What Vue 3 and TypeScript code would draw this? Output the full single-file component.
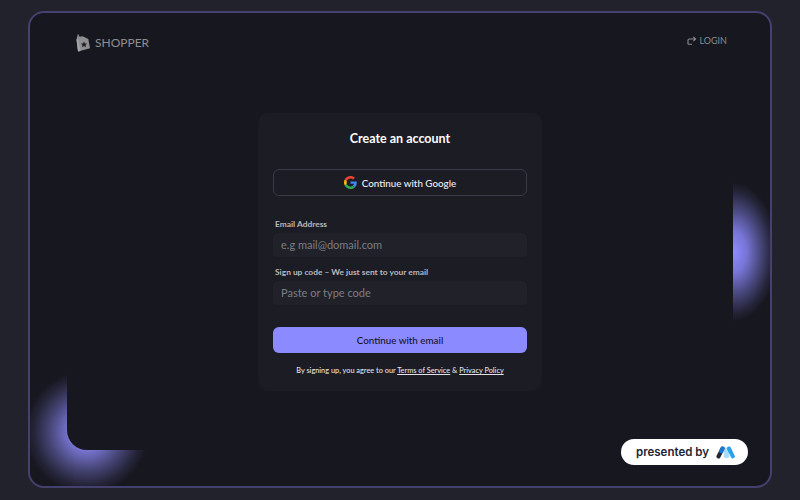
<template>
  <div class="page">
    <div class="frame">
      <div class="glow glow-left"></div>
      <div class="glow glow-right"></div>
      <div class="panel">
        <header class="topbar">
          <div class="brand">
            <svg class="brand-icon" width="16" height="19" viewBox="0 0 16 19">
              <path d="M3 0.8 L4.600 3.700 L7.500 3.300 L13.300 6 L15 15.200 L3 18.400 L1.500 6.200 Z" fill="#8f8f92" />
              <path d="M3.200 6.500 L5.500 18 L3 18.400 L1.500 6.200 Z" fill="#a6a6a9" />
              <path d="M9 8.500 L9.900 10.500 L12 10.500 L10.500 12 L11 14.200 L9 13.100 L7 14.300 L7.500 12 L6 10.500 L8.100 10.500 Z" fill="#1c1c22" />
            </svg>
            <span>SHOPPER</span>
          </div>
          <a class="login">
            <svg width="10" height="9" viewBox="0 0 10 9">
              <path d="M1 8.200 V4.200 Q1 3 2.200 3 H8.400 M6.300 0.800 L8.600 3 L6.300 5.200 M1 8.200 H5" fill="none" stroke="#8a8a8e" stroke-width="1.100" />
            </svg>
            <span>LOGIN</span>
          </a>
        </header>

        <main class="center">
          <form class="card" @submit.prevent>
            <h1>Create an account</h1>
            <button type="button" class="google-btn">
              <svg width="13" height="13" viewBox="0 0 48 48">
                <path fill="#EA4335" d="M24 9.500c3.500 0 6.700 1.200 9.200 3.600l6.900-6.900C35.900 2.400 30.500 0 24 0 14.600 0 6.500 5.400 2.600 13.200l8 6.200C12.400 13.700 17.700 9.500 24 9.500z" />
                <path fill="#4285F4" d="M47 24.500c0-1.600-.1-3.100-.4-4.500H24v9h12.900c-.6 3-2.200 5.500-4.700 7.200l7.700 6C44.400 38.100 47 31.900 47 24.500z" />
                <path fill="#FBBC05" d="M10.500 28.600c-.5-1.400-.8-3-.8-4.600s.3-3.200.8-4.600l-8-6.200C.9 16.500 0 20.100 0 24s.9 7.500 2.600 10.800l7.900-6.200z" />
                <path fill="#34A853" d="M24 48c6.500 0 11.900-2.100 15.900-5.800l-7.700-6c-2.200 1.400-4.900 2.300-8.200 2.300-6.300 0-11.600-4.200-13.500-9.900l-8 6.200C6.500 42.600 14.600 48 24 48z" />
              </svg>
              <span>Continue with Google</span>
            </button>

            <label class="field first">
              <span>Email Address</span>
              <input type="text" placeholder="e.g mail@domail.com" />
            </label>
            <label class="field">
              <span>Sign up code – We just sent to your email</span>
              <input type="text" placeholder="Paste or type code" />
            </label>

            <button type="submit" class="email-btn">Continue with email</button>
            <p class="terms">
              By signing up, you agree to our <a>Terms of Service</a> &amp; <a>Privacy Policy</a>
            </p>
          </form>
        </main>
      </div>

      <div class="presented">
        <span>presented by</span>
        <svg width="20" height="13" viewBox="0 0 20 13">
          <path d="M8 2.500 L11.500 10" stroke="#a9dcfb" stroke-width="4" stroke-linecap="round" />
          <path d="M12.500 2.500 L9.500 10" stroke="#a9dcfb" stroke-width="4" stroke-linecap="round" />
          <path d="M13 2.500 L16.800 10.300" stroke="#2aa0ee" stroke-width="4" stroke-linecap="round" />
          <path d="M6.500 2.500 L2.500 10.500" stroke="#24272f" stroke-width="4" stroke-linecap="round" />
          <path d="M6.500 2.500 L5.200 5.200" stroke="#1577d9" stroke-width="4" stroke-linecap="round" />
        </svg>
      </div>
    </div>
  </div>
</template>

<script setup lang="ts">
</script>

<style>
html, body {
  margin: 0;
  background: #22222c;
}
</style>

<style scoped>
.page {
  width: 800px;
  height: 500px;
  box-sizing: border-box;
  padding: 11px 28px 12px;
  background: #22222c;
  font-family: Lato, "Open Sans", sans-serif;
}

.frame {
  position: relative;
  height: 100%;
  box-sizing: border-box;
  padding: 0 37px 36px;
  border: 2px solid #45416f;
  border-radius: 16px;
  background: #17171f;
  overflow: hidden;
  display: flex;
}

.glow {
  position: absolute;
}

.glow-left {
  left: -5px;
  bottom: -8px;
  width: 124px;
  height: 124px;
  background: radial-gradient(closest-side, #8a88f2 0%, #7674cf 30%, #444372 62%, #25253a 85%, rgba(23, 23, 31, 0) 100%);
}

.glow-right {
  right: -8px;
  top: 169px;
  width: 90px;
  height: 140px;
  background: radial-gradient(closest-side, #8e8cff 0%, #7775d6 30%, #47467a 62%, #26263c 85%, rgba(23, 23, 31, 0) 100%);
}

.panel {
  position: relative;
  flex: 1;
  display: flex;
  flex-direction: column;
  background: #17171f;
  border-bottom-left-radius: 20px;
}

.topbar {
  display: flex;
  justify-content: space-between;
  align-items: center;
  padding: 19px 6px 0 8px;
  height: 21px;
}

.brand {
  display: flex;
  align-items: center;
  gap: 4px;
  color: #8e8e91;
  font-size: 12px;
  font-weight: 400;
}

.login {
  display: flex;
  align-items: center;
  gap: 3px;
  color: #8a8a8e;
  font-size: 9px;
  margin-top: -4px;
}

.center {
  display: flex;
  justify-content: center;
  padding-top: 60px;
}

.card {
  width: 284px;
  height: 278px;
  box-sizing: border-box;
  padding: 18px 15px 0;
  border-radius: 10px;
  background: #1c1c25;
  display: flex;
  flex-direction: column;
}

h1 {
  margin: 0;
  color: #fff;
  font-size: 12.500px;
  line-height: 16px;
  font-weight: 700;
  text-align: center;
}

.google-btn {
  margin-top: 22px;
  height: 27px;
  flex: none;
  border: 1px solid #3a3a46;
  border-radius: 6px;
  background: transparent;
  color: #eeeef2;
  font: 500 9.800px Lato, sans-serif;
  display: flex;
  align-items: center;
  justify-content: center;
  gap: 5px;
}

.field {
  display: flex;
  flex-direction: column;
  margin-top: 9px;
}

.field.first {
  margin-top: 22px;
}

.field span {
  padding-left: 2px;
  color: #b8b8bf;
  font-size: 8.400px;
  line-height: 12px;
  font-weight: 700;
  margin-bottom: 3px;
}

.field input {
  height: 24px;
  box-sizing: border-box;
  padding: 0 8px 2px;
  border: none;
  border-radius: 5px;
  outline: none;
  background: #21212a;
  color: #fff;
  font: 400 11px Lato, sans-serif;
}

.field input::placeholder {
  color: #7e7e85;
  opacity: 1;
}

.email-btn {
  margin-top: 22px;
  height: 26px;
  flex: none;
  border: none;
  border-radius: 6px;
  background: #8c8aff;
  color: #14141f;
  font: 500 9.800px Lato, sans-serif;
}

.terms {
  margin: 12px 0 0;
  color: #e2e2e6;
  font-size: 7.350px;
  line-height: 11px;
  font-weight: 500;
  text-align: center;
}

.terms a {
  text-decoration: underline;
}

.presented {
  position: absolute;
  right: 22px;
  bottom: 21px;
  width: 127px;
  height: 26px;
  box-sizing: border-box;
  padding-left: 15px;
  gap: 7px;
  border-radius: 13px;
  background: #fff;
  display: flex;
  align-items: center;
  color: #1e2433;
  font: 600 11.500px Inter, sans-serif;
}
</style>
